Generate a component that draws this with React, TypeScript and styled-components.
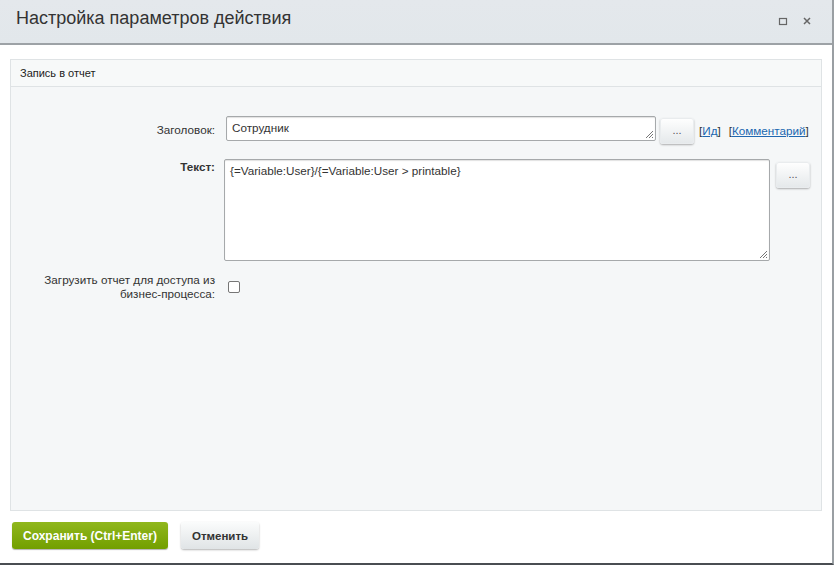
import styled, { createGlobalStyle } from "styled-components";

const GlobalStyle = createGlobalStyle`
  html, body {
    margin: 0;
    padding: 0;
    background: #ffffff;
  }
  body {
    font-family: "Liberation Sans", Arial, sans-serif;
    color: #333;
  }
`;

const Dialog = styled.div`
  box-sizing: border-box;
  width: 834px;
  height: 565px;
  display: flex;
  flex-direction: column;
  background: #fff;
  border-right: 2px solid #9a9fa3;
  border-bottom: 2px solid #4a4e52;
  position: relative;
  overflow: hidden;
`;

const Header = styled.div`
  flex: none;
  display: flex;
  align-items: center;
  justify-content: space-between;
  padding: 0 16px;
  background: linear-gradient(#e4e8ec, #e2e7eb);
  border-bottom: 2px solid #9da2a6;
  box-sizing: border-box;
  height: 45px;
`;

const Title = styled.div`
  font-size: 18px;
  color: #333;
  margin-top: -6px;
`;

const HeaderIcons = styled.div`
  display: flex;
  align-items: center;
  gap: 14px;
  margin-top: -2px;
  margin-right: 4px;
`;

const Body = styled.div`
  flex: 1;
  display: flex;
  flex-direction: column;
  padding: 14px 10px 0 10px;
  background: #fff;
`;

const Section = styled.div`
  height: 452px;
  display: flex;
  flex-direction: column;
  border: 1px solid #dfe3e5;
  background: #f5f7f8;
  box-sizing: border-box;
`;

const SectionTitle = styled.div`
  height: 26px;
  flex: none;
  display: flex;
  align-items: center;
  padding: 0 9px;
  font-size: 11px;
  color: #222;
  border-bottom: 1px solid #dfe3e5;
  background: #f7f9f9;
`;

const Form = styled.div`
  display: flex;
  flex-direction: column;
  padding-top: 29px;
  font-size: 11.7px;
`;

const Row = styled.div<{ $mt?: number }>`
  display: flex;
  align-items: flex-start;
  margin-top: ${(p) => p.$mt ?? 0}px;
`;

const Label = styled.div<{ $bold?: boolean; $pt?: number }>`
  width: 204px;
  flex: none;
  text-align: right;
  line-height: 14px;
  color: #333;
  font-weight: ${(p) => (p.$bold ? "bold" : "normal")};
  padding-top: ${(p) => p.$pt ?? 0}px;
`;

const Field = styled.div<{ $w: number; $h: number; $ml: number }>`
  box-sizing: border-box;
  width: ${(p) => p.$w}px;
  height: ${(p) => p.$h}px;
  margin-left: ${(p) => p.$ml}px;
  background: #fff;
  border: 1px solid #a6a9ab;
  border-radius: 2px;
  box-shadow: inset 0 1px 1px rgba(0, 0, 0, 0.12);
  color: #333;
  padding: 4px 5px;
  position: relative;
  flex: none;
`;

const Grip = styled.svg`
  position: absolute;
  right: 1px;
  bottom: 1px;
`;

const DotsButton = styled.div<{ $ml: number; $mt: number }>`
  box-sizing: border-box;
  width: 34px;
  height: 26px;
  margin-left: ${(p) => p.$ml}px;
  margin-top: ${(p) => p.$mt}px;
  border-radius: 3px;
  background: linear-gradient(#ffffff, #e4e8ea);
  box-shadow: 0 1px 2px rgba(0, 0, 0, 0.3), inset 0 0 0 1px #e9ecee;
  display: flex;
  align-items: center;
  justify-content: center;
  font-size: 11px;
  color: #555;
  flex: none;
  padding-bottom: 3px;
`;

const LinkGroup = styled.div`
  display: flex;
  gap: 8px;
  margin-left: 5px;
  margin-top: 8px;
  color: #333;
`;

const Link = styled.a`
  color: #2067b0;
  text-decoration: underline;
`;

const Checkbox = styled.div`
  box-sizing: border-box;
  width: 12px;
  height: 12px;
  border: 1px solid #767676;
  border-radius: 2px;
  background: #fff;
  margin-left: 13px;
  margin-top: 8px;
`;

const Footer = styled.div`
  display: flex;
  align-items: center;
  gap: 13px;
  padding: 11px 2px 0 2px;
`;

const SaveButton = styled.div`
  box-sizing: border-box;
  height: 27px;
  padding: 0 11px;
  display: flex;
  align-items: center;
  border-radius: 3px;
  background: linear-gradient(#90b71c, #729f00);
  box-shadow: 0 1px 1px rgba(0, 0, 0, 0.3);
  color: #fff;
  font-weight: bold;
  font-size: 12px;
`;

const CancelButton = styled.div`
  box-sizing: border-box;
  height: 27px;
  padding: 0 11px;
  display: flex;
  align-items: center;
  border-radius: 3px;
  background: linear-gradient(#fbfcfc, #e0e4e6);
  box-shadow: 0 1px 2px rgba(0, 0, 0, 0.3);
  color: #333;
  font-weight: bold;
  font-size: 11.5px;
`;

function ResizeGrip() {
  return (
    <Grip width="9" height="9" viewBox="0 0 9 9">
      <path d="M8 1L1 8M8 4L4 8M8 7L7 8" stroke="#777" strokeWidth="1" />
    </Grip>
  );
}

export default function App() {
  return (
    <>
      <GlobalStyle />
      <Dialog>
        <Header>
          <Title>Настройка параметров действия</Title>
          <HeaderIcons>
            <svg width="10" height="10" viewBox="0 0 10 10">
              <rect x="1.5" y="2.5" width="7" height="6" fill="none" stroke="#666" strokeWidth="1.2" />
            </svg>
            <svg width="10" height="10" viewBox="0 0 10 10">
              <path d="M2 2L8 8M8 2L2 8" stroke="#666" strokeWidth="1.5" />
            </svg>
          </HeaderIcons>
        </Header>
        <Body>
          <Section>
            <SectionTitle>Запись в отчет</SectionTitle>
            <Form>
              <Row>
                <Label $pt={7}>Заголовок:</Label>
                <Field $w={430} $h={25} $ml={11}>
                  Сотрудник
                  <ResizeGrip />
                </Field>
                <DotsButton $ml={4} $mt={2}>...</DotsButton>
                <LinkGroup>
                  <span>
                    [<Link>Ид</Link>]
                  </span>
                  <span>
                    [<Link>Комментарий</Link>]
                  </span>
                </LinkGroup>
              </Row>
              <Row $mt={15}>
                <Label $bold $pt={1}>Текст:</Label>
                <Field $w={546} $h={102} $ml={9}>
                  {"{=Variable:User}/{=Variable:User > printable}"}
                  <ResizeGrip />
                </Field>
                <DotsButton $ml={6} $mt={3}>...</DotsButton>
              </Row>
              <Row $mt={12}>
                <Label>
                  Загрузить отчет для доступа из
                  <br />
                  бизнес-процесса:
                </Label>
                <Checkbox />
              </Row>
            </Form>
          </Section>
          <Footer>
            <SaveButton>Сохранить (Ctrl+Enter)</SaveButton>
            <CancelButton>Отменить</CancelButton>
          </Footer>
        </Body>
      </Dialog>
    </>
  );
}
